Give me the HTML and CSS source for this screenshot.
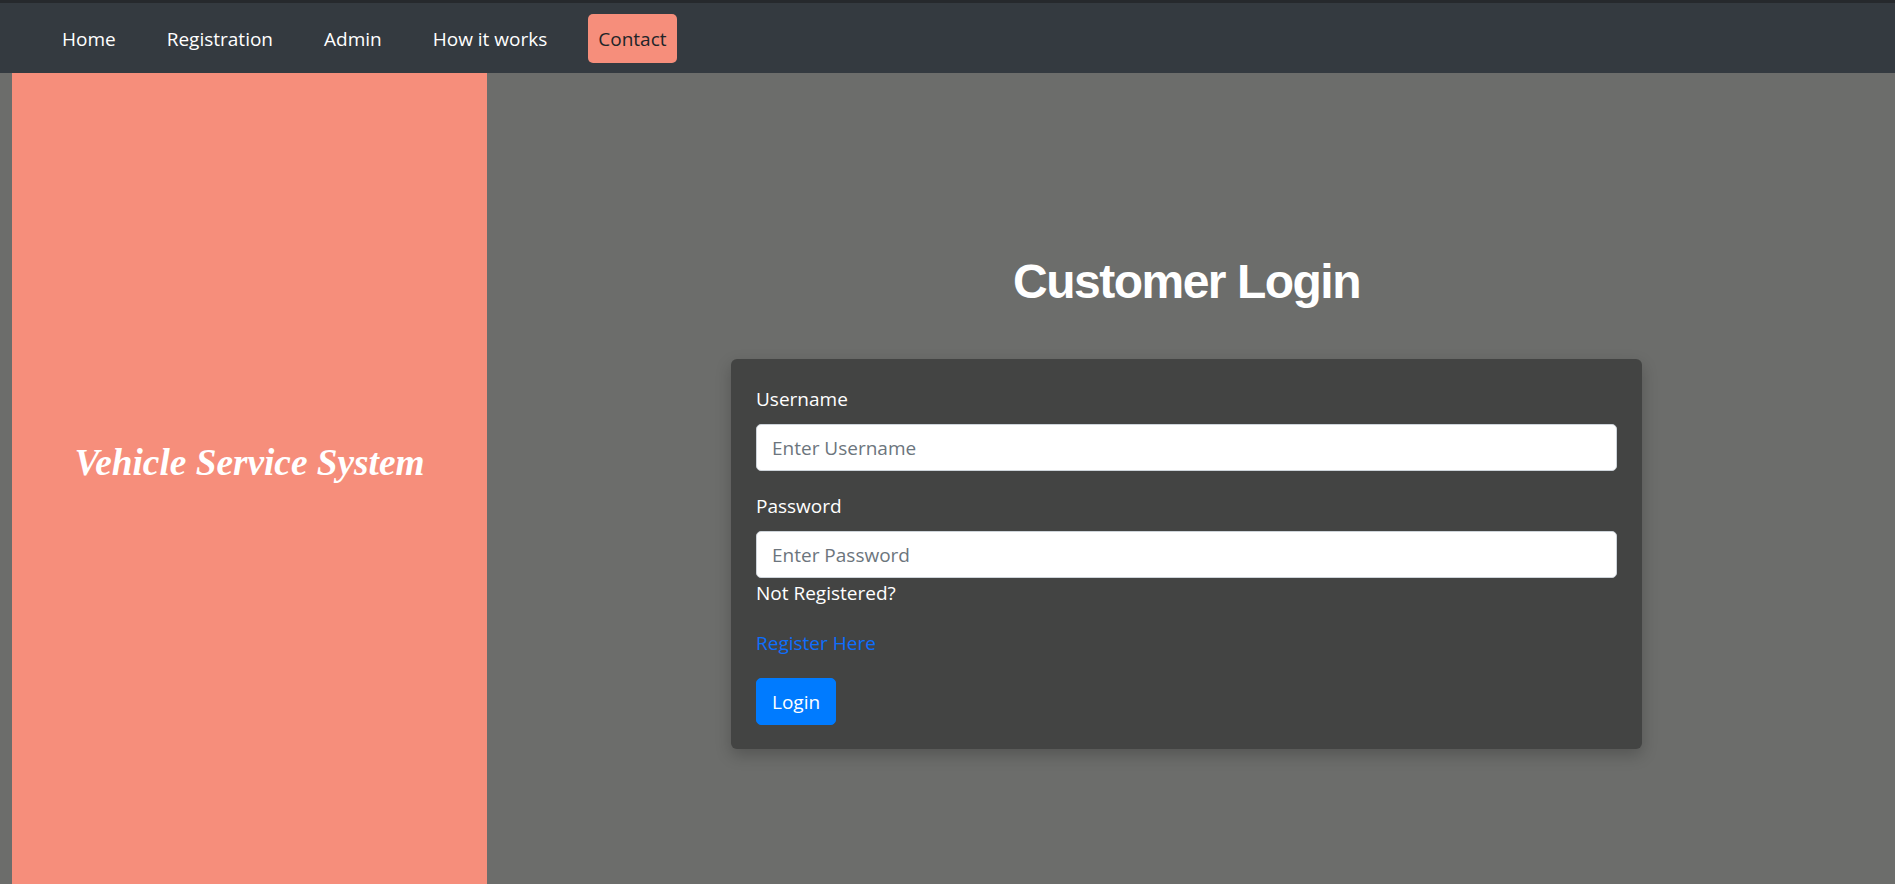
FILE: index.html
```html
<!DOCTYPE html>
<html lang="en">
<head>
<meta charset="utf-8">
<title>Customer Login</title>
<link rel="stylesheet" href="styles.css">
</head>
<body>
<nav class="navbar">
  <ul class="nav-list">
    <li><a class="nav-link" href="#">Home</a></li>
    <li><a class="nav-link" href="#">Registration</a></li>
    <li><a class="nav-link" href="#">Admin</a></li>
    <li><a class="nav-link" href="#">How it works</a></li>
    <li><a class="nav-link nav-link-active" href="#">Contact</a></li>
  </ul>
</nav>
<main class="page">
  <aside class="brand-panel">
    <h2 class="brand-title">Vehicle Service System</h2>
  </aside>
  <section class="login-area">
    <h1 class="login-title">Customer Login</h1>
    <form class="login-card">
      <div class="form-group">
        <label class="form-label" for="username">Username</label>
        <input class="form-control" id="username" type="text" placeholder="Enter Username">
      </div>
      <div class="form-group form-group-tight">
        <label class="form-label" for="password">Password</label>
        <input class="form-control" id="password" type="password" placeholder="Enter Password">
      </div>
      <p class="form-text">Not Registered?</p>
      <p class="form-text"><a class="link" href="#">Register Here</a></p>
      <button class="btn-primary" type="button">Login</button>
    </form>
  </section>
</main>
</body>
</html>
```

FILE: styles.css
```css
* {
  box-sizing: border-box;
}

html, body {
  margin: 0;
  padding: 0;
  height: 100%;
}

body {
  font-family: "Open Sans", "Noto Sans", sans-serif;
  font-size: 19px;
  line-height: 30px;
  background: #6c6d6b;
  color: #fff;
  display: flex;
  flex-direction: column;
  overflow: hidden;
}

.navbar {
  height: 73px;
  background: #343a40;
  border-top: 3px solid #26292d;
  display: flex;
  align-items: center;
  padding-left: 52px;
  flex-shrink: 0;
}

.nav-list {
  list-style: none;
  margin: 0;
  padding: 0;
  display: flex;
  align-items: center;
  gap: 31px;
}

.nav-link {
  display: block;
  color: #fff;
  text-decoration: none;
  padding: 10px 10px 9px;
  border-radius: 5px;
}

.nav-link-active {
  background: #f68e7b;
  color: #212529;
}

.page {
  flex: 1;
  display: flex;
  padding-left: 12px;
}

.brand-panel {
  width: 475px;
  background: #f68e7b;
  display: flex;
  align-items: center;
  justify-content: center;
  padding-bottom: 31px;
}

.brand-title {
  margin: 0;
  font-family: "Liberation Serif", "Times New Roman", serif;
  font-style: italic;
  font-weight: bold;
  font-size: 37.3px;
  line-height: 44px;
  color: #fff;
}

.login-area {
  flex: 1;
  display: flex;
  flex-direction: column;
  align-items: center;
  padding-top: 180px;
  padding-right: 9px;
}

.login-title {
  margin: 0 0 48px;
  font-family: "Liberation Sans", Arial, sans-serif;
  font-weight: bold;
  font-size: 48px;
  line-height: 58px;
  letter-spacing: -1.5px;
  color: #fff;
}

.login-card {
  width: 911px;
  background: #434443;
  border-radius: 6px;
  padding: 25px 25px 24px;
  box-shadow: 0 6px 16px rgba(0, 0, 0, 0.22);
}

.form-group {
  margin-bottom: 20px;
}

.form-group-tight {
  margin-bottom: 0;
}

.form-label {
  display: block;
  margin-bottom: 10px;
}

.form-control {
  display: block;
  width: 100%;
  height: 47px;
  padding: 0 15px;
  font-family: inherit;
  font-size: 19px;
  color: #495057;
  background: #fff;
  border: 1px solid #ced4da;
  border-radius: 5px;
}

.form-control::placeholder {
  color: #6c757d;
}

.form-text {
  margin: 0 0 20px;
}

.link {
  color: #0d6efd;
  text-decoration: none;
}

.btn-primary {
  display: block;
  height: 47px;
  padding: 0 15px;
  font-family: inherit;
  font-size: 19px;
  color: #fff;
  background: #007bff;
  border: 1px solid #007bff;
  border-radius: 5px;
}
```
